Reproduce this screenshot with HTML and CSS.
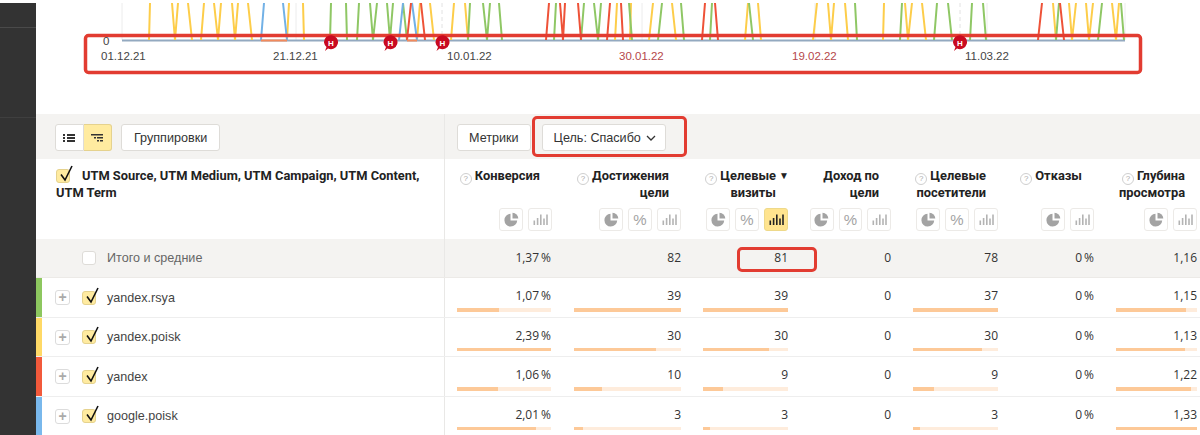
FILE: index.html
```html
<!DOCTYPE html>
<html lang="ru">
<head>
<meta charset="utf-8">
<title>Отчёт</title>
<link rel="stylesheet" href="styles.css">
</head>
<body>
<svg class="defs" width="0" height="0" aria-hidden="true">
<symbol id="i-pie" viewBox="0 0 15 15"><path d="M6.500 1.800A6.400 6.400 0 1 0 13.200 8.500H6.500z"/><path d="M8.500 0.800A5.800 5.800 0 0 1 14.300 6.600H8.500z"/></symbol>
<symbol id="i-bars" viewBox="0 0 15 11"><path d="M0.500 6.500h1.600V11H0.500zM3.800 4h1.600v7H3.800zM7 0.500h1.600V11H7zM10.200 4.500h1.600V11h-1.600zM13.200 0.500h1.600V11h-1.600z"/></symbol>
<symbol id="i-check" viewBox="0 0 15 17"><path d="M3 9.500l4 5.500 7-14" fill="none" stroke="#111" stroke-width="1.600"/></symbol>
<symbol id="i-pin" viewBox="-8 -8 16 17"><path d="M-7 0A7 7 0 1 1-3 6L-6 8.500L-4.500 4.500A7 7 0 0 1-7 0Z"/></symbol>
</svg>
<div class="page">
<aside class="side"><div class="side-a"></div><div class="side-b"></div></aside>
<main class="main">
<section class="chart">
<svg class="chart-svg" viewBox="36 0 1164 114" width="1164" height="114">
<path class="grid" d="M122 3V40M296 3V40M642 3V40M815 3V40M987 3V40M1125 3V40"/>
<path class="grid dash" d="M442 3V40M960 3V40"/>
<path class="base" d="M122 40.500H1125"/>
<path class="ln y" d="M150 3L149 40M172 3L175 40L178 3M188 3L192 40M204 3L201 40M214 3L218 40L221 3M232 3L235 40L238 3M248 3L252 40M289 3L287 40M303 3L304 40M420 3L417 40M430 3L434 40M454 3L451 40M465 3L468 40M617 3L615 40M631 3L630 40M653 3L649 40M672 3L676 40M748 3L745 40M758 3L761 40M817 3L813 40M828 3L831 40L834 3M845 3L848 40M884 3L883 40M905 3L908 40L912 3M922 3L926 40M1053 3L1056 40M1069 3L1072 40L1076 3M1086 3L1089 40L1093 3M1112 3L1116 40L1119 3"/>
<path class="ln g" d="M331 3L330 40M346 3L347 40M359 3L357 40M370 3L373 40L377 3M387 3L390 40L393 3M403 3L407 40M470 3L468 40M483 3L487 40L490 3M499 3L502 40M556 3L554 40M584 3L581 40M594 3L598 40L601 3M629 3L632 40M662 3L658 40M681 3L684 40M712 3L710 40M749 3L753 40M855 3L857 40M902 3L900 40M937 3L934 40M948 3L952 40M972 3L970 40M983 3L986 40M1059 3L1056 40M1102 3L1098 40M1121 3L1124 40"/>
<path class="ln b" d="M264 3L261 40M283 3L287 40M403 3L399 40M412 3L417 40"/>
<path class="ln r" d="M411 3L407 40M421 3L425 40M549 3L546 40M560 3L563 40L565 3M578 3L581 40M610 3L607 40M621 3L623 40M705 3L702 40M715 3L718 40M1042 3L1038 40M1060 3L1064 40"/>
<path class="ln o" d="M261 40.500H287M407 40.500H417"/>
<rect class="callout-rect" x="85.500" y="35.500" width="1055" height="37" rx="3"/>
<g class="pin" transform="translate(331 42.500)"><use href="#i-pin" x="-8" y="-8" width="16" height="17"/><text y="3">Н</text></g>
<g class="pin" transform="translate(390.500 42.500)"><use href="#i-pin" x="-8" y="-8" width="16" height="17"/><text y="3">Н</text></g>
<g class="pin" transform="translate(442.500 42.500)"><use href="#i-pin" x="-8" y="-8" width="16" height="17"/><text y="3">Н</text></g>
<g class="pin" transform="translate(960 42.500)"><use href="#i-pin" x="-8" y="-8" width="16" height="17"/><text y="3">Н</text></g>
<text class="tick" x="103" y="45">0</text>
<text class="tick" x="101" y="60">01.12.21</text>
<text class="tick" x="273" y="60">21.12.21</text>
<text class="tick" x="447" y="60">10.01.22</text>
<text class="tick wk" x="619" y="60">30.01.22</text>
<text class="tick wk" x="792" y="60">19.02.22</text>
<text class="tick" x="965" y="60">11.03.22</text>
</svg>
</section>

<section class="toolbar">
<div class="tool-left">
<div class="seg">
<button class="seg-btn" aria-label="Список"><svg width="14" height="10" viewBox="0 0 14 10"><path class="ico-dark" d="M1 1h2v2H1zM5 1h8v2H5zM1 4h2v2H1zM5 4h8v2H5zM1 7h2v2H1zM5 7h8v2H5z"/></svg></button>
<button class="seg-btn seg-on" aria-label="Дерево"><svg width="14" height="10" viewBox="0 0 14 10"><path class="ico-dark" d="M1 1h12v1.500H1zM4 4h2v1.500H4zM7 4h6v1.500H7zM7 7h2v1.500H7zM10 7h3v1.500h-3z"/></svg></button>
</div>
<button class="btn">Группировки</button>
</div>
<div class="tool-right">
<button class="btn btn-metrics">Метрики</button>
<div class="goal">
<button class="btn btn-goal">Цель: Спасибо<svg class="chev" width="10" height="6" viewBox="0 0 10 6"><path d="M1 1l4 4 4-4"/></svg></button>
<span class="callout callout-goal"></span>
</div>
</div>
</section>

<section class="cols head">
<div class="cell-name head-name"><span class="cb cb-on cb-head"><svg class="tick-mark"><use href="#i-check"/></svg></span>UTM Source, UTM Medium, UTM Campaign, UTM Content, UTM Term</div>
<div class="th"><div class="th-title"><i class="help">?</i>Конверсия</div><div class="modes"><span class="mode"><svg class="pie"><use href="#i-pie"/></svg></span><span class="mode"><svg class="bars"><use href="#i-bars"/></svg></span></div></div>
<div class="th"><div class="th-title"><i class="help">?</i>Достижения<br>цели</div><div class="modes"><span class="mode"><svg class="pie"><use href="#i-pie"/></svg></span><span class="mode pct">%</span><span class="mode"><svg class="bars"><use href="#i-bars"/></svg></span></div></div>
<div class="th"><div class="th-title"><i class="help">?</i>Целевые<br>визиты<span class="sort">▼</span></div><div class="modes"><span class="mode"><svg class="pie"><use href="#i-pie"/></svg></span><span class="mode pct">%</span><span class="mode mode-on"><svg class="bars"><use href="#i-bars"/></svg></span></div></div>
<div class="th"><div class="th-title">Доход по<br>цели</div><div class="modes"><span class="mode"><svg class="pie"><use href="#i-pie"/></svg></span><span class="mode pct">%</span><span class="mode"><svg class="bars"><use href="#i-bars"/></svg></span></div></div>
<div class="th"><div class="th-title"><i class="help">?</i>Целевые<br>посетители</div><div class="modes"><span class="mode"><svg class="pie"><use href="#i-pie"/></svg></span><span class="mode pct">%</span><span class="mode"><svg class="bars"><use href="#i-bars"/></svg></span></div></div>
<div class="th"><div class="th-title"><i class="help">?</i>Отказы</div><div class="modes"><span class="mode"><svg class="pie"><use href="#i-pie"/></svg></span><span class="mode"><svg class="bars"><use href="#i-bars"/></svg></span></div></div>
<div class="th"><div class="th-title"><i class="help">?</i>Глубина<br>просмотра</div><div class="modes"><span class="mode"><svg class="pie"><use href="#i-pie"/></svg></span><span class="mode"><svg class="bars"><use href="#i-bars"/></svg></span></div></div>
</section>

<section class="cols total">
<div class="cell-name total-name"><span class="cb"></span><span class="total-label">Итого и средние</span></div>
<div class="td">1,37<small>&#8201;%</small></div>
<div class="td">82</div>
<div class="td td-flag">81<span class="callout callout-81"></span></div>
<div class="td">0</div>
<div class="td">78</div>
<div class="td">0<small>&#8201;%</small></div>
<div class="td">1,16</div>
</section>

<section class="cols row">
<div class="cell-name row-name c-green"><span class="plus">+</span><span class="cb cb-on"><svg class="tick-mark"><use href="#i-check"/></svg></span><span class="label">yandex.rsya</span></div>
<div class="td">1,07<small>&#8201;%</small><div class="bar"><div class="fill" style="width:45%"></div></div></div>
<div class="td">39<div class="bar"><div class="fill" style="width:100%"></div></div></div>
<div class="td">39<div class="bar"><div class="fill" style="width:100%"></div></div></div>
<div class="td">0</div>
<div class="td">37<div class="bar"><div class="fill" style="width:100%"></div></div></div>
<div class="td">0<small>&#8201;%</small></div>
<div class="td">1,15<div class="bar"><div class="fill" style="width:87%"></div></div></div>
</section>

<section class="cols row">
<div class="cell-name row-name c-yellow"><span class="plus">+</span><span class="cb cb-on"><svg class="tick-mark"><use href="#i-check"/></svg></span><span class="label">yandex.poisk</span></div>
<div class="td">2,39<small>&#8201;%</small><div class="bar"><div class="fill" style="width:100%"></div></div></div>
<div class="td">30<div class="bar"><div class="fill" style="width:77%"></div></div></div>
<div class="td">30<div class="bar"><div class="fill" style="width:78%"></div></div></div>
<div class="td">0</div>
<div class="td">30<div class="bar"><div class="fill" style="width:81%"></div></div></div>
<div class="td">0<small>&#8201;%</small></div>
<div class="td">1,13<div class="bar"><div class="fill" style="width:85%"></div></div></div>
</section>

<section class="cols row">
<div class="cell-name row-name c-red"><span class="plus">+</span><span class="cb cb-on"><svg class="tick-mark"><use href="#i-check"/></svg></span><span class="label">yandex</span></div>
<div class="td">1,06<small>&#8201;%</small><div class="bar"><div class="fill" style="width:44%"></div></div></div>
<div class="td">10<div class="bar"><div class="fill" style="width:26.5%"></div></div></div>
<div class="td">9<div class="bar"><div class="fill" style="width:23%"></div></div></div>
<div class="td">0</div>
<div class="td">9<div class="bar"><div class="fill" style="width:25%"></div></div></div>
<div class="td">0<small>&#8201;%</small></div>
<div class="td">1,22<div class="bar"><div class="fill" style="width:92%"></div></div></div>
</section>

<section class="cols row">
<div class="cell-name row-name c-blue"><span class="plus">+</span><span class="cb cb-on"><svg class="tick-mark"><use href="#i-check"/></svg></span><span class="label">google.poisk</span></div>
<div class="td">2,01<small>&#8201;%</small><div class="bar"><div class="fill" style="width:84%"></div></div></div>
<div class="td">3<div class="bar"><div class="fill" style="width:8%"></div></div></div>
<div class="td">3<div class="bar"><div class="fill" style="width:8%"></div></div></div>
<div class="td">0</div>
<div class="td">3<div class="bar"><div class="fill" style="width:8%"></div></div></div>
<div class="td">0<small>&#8201;%</small></div>
<div class="td">1,33<div class="bar"><div class="fill" style="width:100%"></div></div></div>
</section>
</main>
</div>
</body>
</html>
```
FILE: styles.css
```css
* { box-sizing: border-box; }
html, body { margin: 0; padding: 0; background: #fff; }
body { width: 1200px; height: 435px; overflow: hidden; font-family: "Open Sans", "Noto Sans", sans-serif; font-size: 12px; color: #333; }
.defs { display: block; height: 0; }
.page { display: flex; height: 435px; overflow: hidden; }

.side { width: 36px; flex: none; margin-top: 3px; background: #333; }
.side-a { height: 25px; border-bottom: 1px solid #4a4a4a; }
.side-b { height: 90px; border-bottom: 1px solid #3f3f3f; }

.main { width: 1172px; flex: none; }

.chart { height: 114px; }
.chart-svg { display: block; }
.grid { stroke: #ececec; stroke-width: 1; fill: none; }
.dash { stroke-dasharray: 4 3; stroke: #e2e2e2; }
.base { stroke: #93a9c0; stroke-width: 2; fill: none; }
.ln { fill: none; stroke-width: 2; }
.y { stroke: #fdcd4a; }
.g { stroke: #8fc765; }
.b { stroke: #72b1e6; }
.r { stroke: #ee5238; }
.o { stroke: #f28a5c; }
.callout-rect { fill: none; stroke: #e23c31; stroke-width: 3.500; }
.pin { fill: #c90a20; }
.pin text { fill: #fff; font: 700 8px "Liberation Sans", sans-serif; text-anchor: middle; }
.tick { font: 11.500px "Liberation Sans", Arial, sans-serif; fill: #444; }
.wk { fill: #b5474a; }

.toolbar { display: flex; height: 45px; background: #f4f3f1; font-family: "Liberation Sans", Arial, sans-serif; }
.tool-left { width: 409px; flex: none; display: flex; gap: 9px; padding: 10px 0 0 19px; border-right: 1px solid #e9e8e6; }
.tool-right { flex: 1; display: flex; gap: 11px; padding: 10px 0 0 12px; }
.seg { display: flex; height: 27px; }
.seg-btn { width: 28.500px; height: 27px; padding: 0; background: #fff; border: 1px solid #dedcd8; border-radius: 3px 0 0 3px; display: flex; align-items: center; justify-content: center; }
.seg-on { background: #ffeba0; border-color: #e5d28e; border-left: 0; border-radius: 0 3px 3px 0; }
.ico-dark { fill: #333; }
.btn { height: 27px; padding: 0 12px; background: #fff; border: 1px solid #dedcd8; border-radius: 3px; font: 12.600px "Liberation Sans", Arial, sans-serif; color: #333; white-space: nowrap; }
.btn-metrics { padding: 0 11px; }
.btn-goal { padding: 0 9px 0 11px; }
.goal { position: relative; height: 27px; }
.chev { margin-left: 5px; vertical-align: 1px; }
.chev path { fill: none; stroke: #333; stroke-width: 1.300; }
.callout { position: absolute; border: 3.500px solid #e23c31; border-radius: 5px; pointer-events: none; }
.callout-goal { left: -10px; right: -21px; top: -8px; bottom: -6px; }
.callout-81 { left: 45px; right: -18px; top: 8px; bottom: 5px; }

.cols { display: grid; grid-template-columns: 409px 118px 129px 107px 103px 107px 96px 103px; }
.cell-name { border-right: 1px solid #e9e8e6; }

.head { height: 80px; }
.head-name { padding: 9px 20px 0 20px; font: 700 12.850px/16.500px Roboto, sans-serif; color: #222; }
.cb { display: inline-block; position: relative; width: 14px; height: 14px; background: #fff; border: 1px solid #dedcd8; border-radius: 3px; flex: none; }
.cb-on { background: #ffeba0; border-color: #e5d28e; }
.cb-head { margin-right: 12px; vertical-align: -3px; }
.tick-mark { position: absolute; left: 1px; top: -5px; width: 15px; height: 17px; }

.th { padding: 9px 11px 8px; display: flex; flex-direction: column; justify-content: space-between; }
.th-title { position: relative; padding-right: 12px; text-align: right; font: 700 12.850px/16.500px Roboto, sans-serif; color: #222; white-space: nowrap; }
.help { display: inline-block; width: 12px; height: 12px; margin-right: 3px; border: 1px solid #cfcfcf; border-radius: 50%; font: 400 8px/10px "Liberation Sans", sans-serif; color: #aaa; text-align: center; vertical-align: -1px; }
.sort { position: absolute; right: -1px; top: 0; font-size: 10px; font-weight: 400; color: #222; }
.modes { display: flex; justify-content: flex-end; gap: 5px; }
.mode { width: 24px; height: 23px; display: flex; align-items: center; justify-content: center; background: #fff; border: 1px solid #eceae7; border-radius: 3px; }
.mode-on { background: #ffe48f; border-color: #eed98a; }
.pct { font: 15px "Liberation Sans", sans-serif; color: #a3a3a3; }
.pie { width: 15px; height: 15px; fill: #a3a3a3; }
.bars { width: 15px; height: 11px; fill: #b3b3b3; }
.mode-on .bars { fill: #222; }

.total { height: 39px; background: #f4f3f1; border-bottom: 1px solid #eceae7; }
.total-name { display: flex; align-items: center; padding-left: 46px; font-family: "Liberation Sans", Arial, sans-serif; font-size: 12.600px; }
.total-label { margin-left: 11px; color: #666; }
.total .td { padding-top: 11px; }
.td { position: relative; padding: 10px 11px 0; text-align: right; line-height: 16px; color: #333; white-space: nowrap; }
.td:nth-child(2) { padding-left: 12px; padding-right: 12px; }
.td small { font-size: 12px; }

.row { height: 39.500px; border-bottom: 1px solid #eeeeee; }
.row-name { display: flex; align-items: center; padding: 1px 0 0 13px; border-left: 6px solid #ccc; font-family: "Liberation Sans", Arial, sans-serif; font-size: 12.600px; color: #444; }
.c-green { border-left-color: #8dc75f; }
.c-yellow { border-left-color: #ffd966; }
.c-red { border-left-color: #f2593b; }
.c-blue { border-left-color: #79b8ec; }
.plus { width: 15px; height: 15px; margin-right: 12px; border: 1px solid #dcdcdc; border-radius: 3px; background: #fff; font: 700 14px/12px "Liberation Sans", sans-serif; color: #aaa; text-align: center; }
.label { margin-left: 11px; }
.bar { height: 3.500px; margin-top: 4px; background: #feecdc; }
.fill { height: 100%; background: #fdc998; }
```
